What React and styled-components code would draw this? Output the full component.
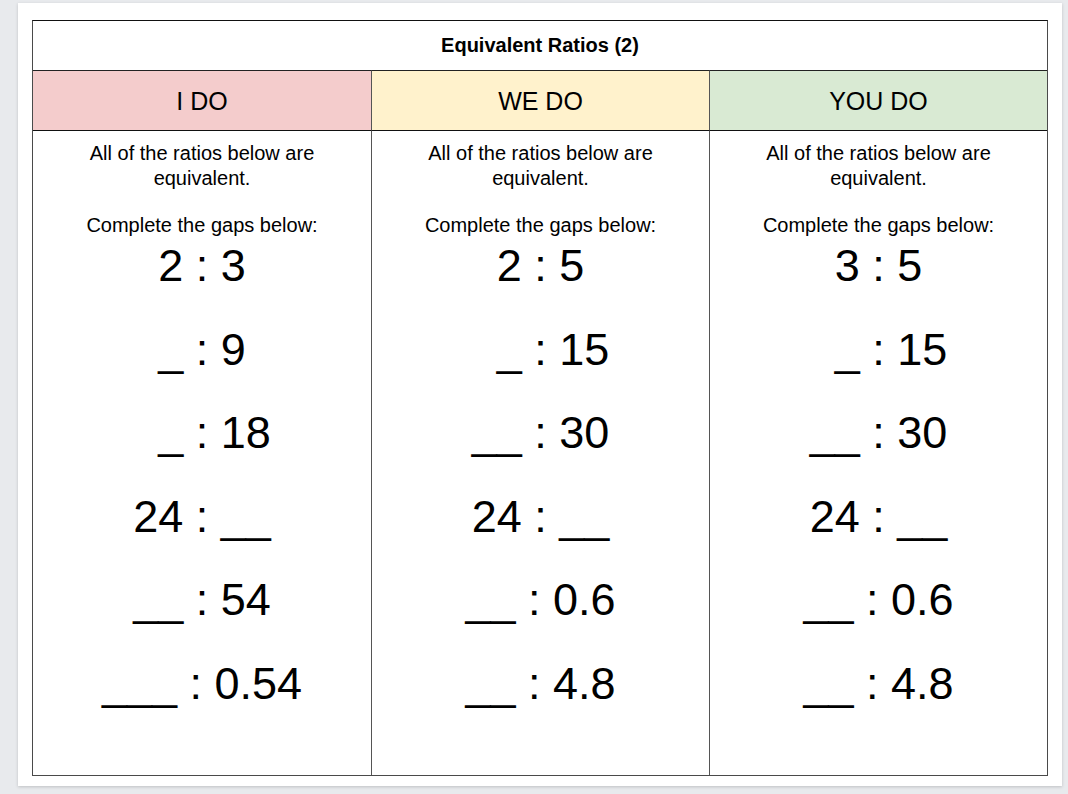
import React from "react";
import styled, { createGlobalStyle } from "styled-components";

const Global = createGlobalStyle`
  html, body { margin: 0; padding: 0; }
  body {
    background: #e8eaed;
    font-family: "Liberation Sans", Arial, sans-serif;
    color: #000;
  }
`;

const Page = styled.div`
  width: 1068px;
  height: 794px;
  box-sizing: border-box;
  padding: 3px 6px 8px 18px;
`;

const Sheet = styled.div`
  width: 100%;
  height: 100%;
  box-sizing: border-box;
  background: #fff;
  box-shadow: 0 1px 3px rgba(0, 0, 0, 0.18);
  padding: 17px 14px 10px 14px;
`;

const Table = styled.div`
  height: 100%;
  box-sizing: border-box;
  display: grid;
  grid-template-columns: 338px 338px 1fr;
  grid-template-rows: 49px 61px 1fr;
  border: 1px solid #4a4a4a;
  border-top-color: #111;
`;

const TitleCell = styled.div`
  grid-column: 1 / -1;
  display: flex;
  align-items: center;
  justify-content: center;
  font-weight: 700;
  font-size: 20px;
`;

const HeaderCell = styled.div`
  display: flex;
  align-items: center;
  justify-content: center;
  font-size: 25px;
  background: ${(p) => p.$bg};
  border-top: 1px solid #222;
  border-bottom: 1px solid #111;
  border-left: ${(p) => (p.$first ? "none" : "1px solid #555")};
  padding-top: 2px;
`;

const BodyCell = styled.div`
  display: flex;
  flex-direction: column;
  align-items: center;
  padding-top: 10px;
  border-left: ${(p) => (p.$first ? "none" : "1px solid #555")};
`;

const Instruction = styled.p`
  margin: 0;
  font-size: 20px;
  line-height: 25px;
  text-align: center;
  width: 250px;
  & + & {
    margin-top: 22px;
  }
`;

const RatioList = styled.div`
  display: flex;
  flex-direction: column;
  align-items: center;
  gap: 31.6px;
  margin-top: 2px;
`;

const Ratio = styled.div`
  font-size: 45px;
  line-height: 52px;
  white-space: pre;
  text-align: center;
`;

const columns = [
  {
    title: "I DO",
    bg: "#f4cccc",
    ratios: ["2 : 3", "_ : 9", "  _ : 18", "24 : __", "__ : 54", "___ : 0.54"],
  },
  {
    title: "WE DO",
    bg: "#fff2cc",
    ratios: ["2 : 5", "  _ : 15", "__ : 30", "24 : __", "__ : 0.6", "__ : 4.8"],
  },
  {
    title: "YOU DO",
    bg: "#d9ead3",
    ratios: ["3 : 5", "  _ : 15", "__ : 30", "24 : __", "__ : 0.6", "__ : 4.8"],
  },
];

export default function App() {
  return (
    <>
      <Global />
      <Page>
        <Sheet>
          <Table>
            <TitleCell>Equivalent Ratios (2)</TitleCell>
            {columns.map((c, i) => (
              <HeaderCell key={c.title} $bg={c.bg} $first={i === 0}>
                {c.title}
              </HeaderCell>
            ))}
            {columns.map((c, i) => (
              <BodyCell key={c.title} $first={i === 0}>
                <Instruction>All of the ratios below are equivalent.</Instruction>
                <Instruction>Complete the gaps below:</Instruction>
                <RatioList>
                  {c.ratios.map((r, j) => (
                    <Ratio key={j}>{r}</Ratio>
                  ))}
                </RatioList>
              </BodyCell>
            ))}
          </Table>
        </Sheet>
      </Page>
    </>
  );
}
